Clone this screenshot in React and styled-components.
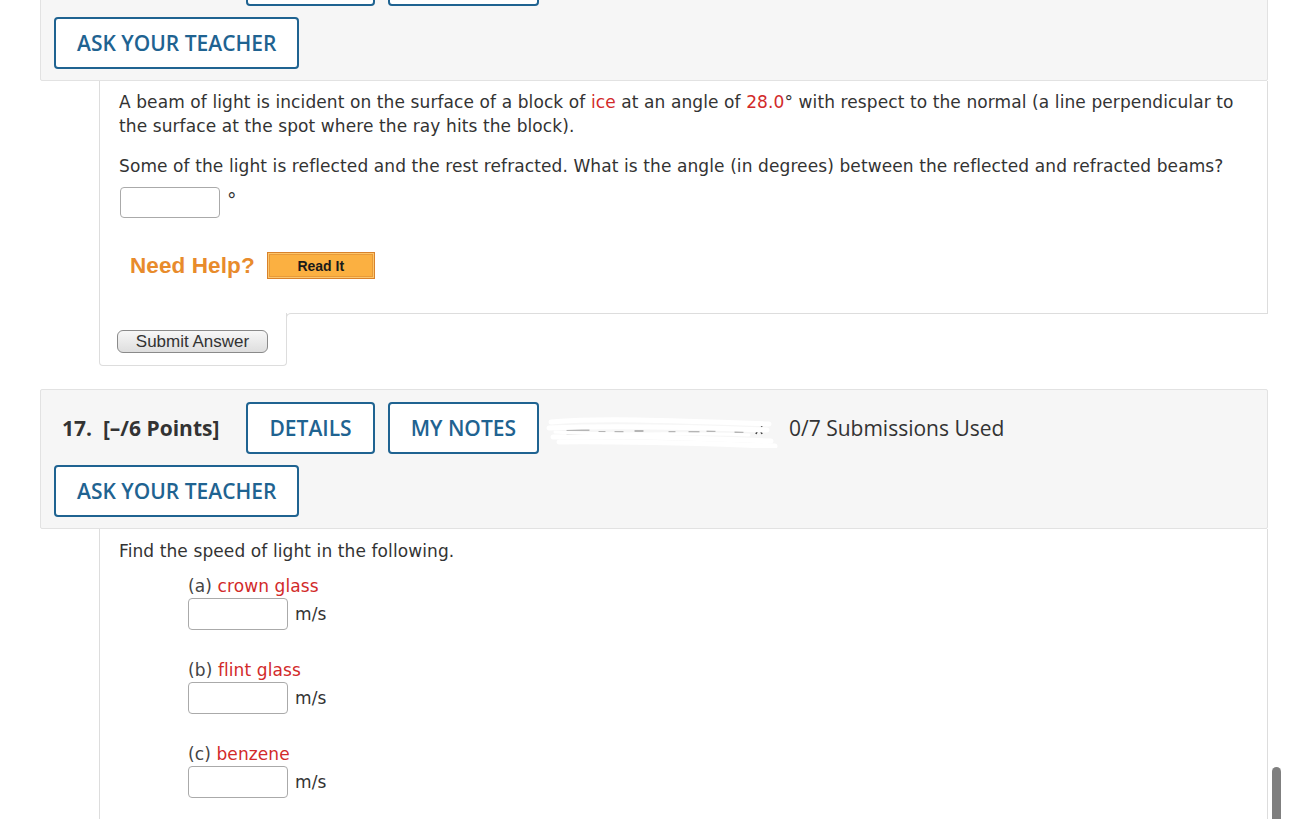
import React from "react";
import styled, { createGlobalStyle } from "styled-components";

const GlobalStyle = createGlobalStyle`
  html, body { margin: 0; padding: 0; background: #ffffff; }
  body { overflow: hidden; }
  * { box-sizing: border-box; }
`;

const Page = styled.div`
  margin: -59px 22px 0 40px;
  width: 1228px;
  color: #333333;
`;

const Question = styled.section`
  margin-bottom: 23px;
`;

const Header = styled.div`
  background: #f6f6f6;
  border: 1px solid #e2e2e2;
  border-radius: 2px;
  padding: 12px 13px 11px 13px;
  display: flex;
  flex-direction: column;
  gap: 11px;
`;

const HeaderRow = styled.div`
  display: flex;
  align-items: center;
  gap: 13px;
`;

const Points = styled.span`
  font-family: "Open Sans", "Liberation Sans", sans-serif;
  font-weight: 700;
  font-size: 21px;
  line-height: 24px;
  color: #333333;
  margin: 0 14px 0 8px;
  white-space: nowrap;
`;

const OutlineButton = styled.button`
  font-family: "Open Sans", "Liberation Sans", sans-serif;
  font-size: 21px;
  line-height: 24px;
  font-weight: 600;
  color: #1f6391;
  background: #ffffff;
  border: 2px solid #1f6391;
  border-radius: 4px;
  padding: 12px 21px;
  height: 52px;
  white-space: nowrap;
  cursor: pointer;
`;

const Submissions = styled.span`
  font-family: "Open Sans", "Liberation Sans", sans-serif;
  font-size: 21px;
  line-height: 24px;
  color: #333333;
  white-space: nowrap;
`;

const Redacted = styled.svg`
  display: block;
  margin: 0 -13px;
  flex: none;
`;

const Content = styled.div`
  margin-left: 59px;
  border-left: 1px solid #dddddd;
  border-right: 1px solid #dddddd;
  padding: ${(p) => p.$pt || 9}px 18px 0 19px;
  min-height: ${(p) => p.$minH || 0}px;
  font-family: "DejaVu Sans", Verdana, sans-serif;
  font-size: 17px;
  letter-spacing: 0.1px;
  line-height: 24px;
  color: #333333;
`;

const Para = styled.p`
  margin: 0 0 ${(p) => p.$mb ?? 16}px 0;
`;

const Red = styled.span`
  color: #d22a2a;
`;

const AnswerRow = styled.div`
  display: flex;
  align-items: center;
  gap: 7px;
  margin: ${(p) => p.$mt || 0}px 0 0 ${(p) => p.$ml || 0}px;
`;

const AnswerInput = styled.input`
  width: 100px;
  height: ${(p) => p.$h || 31}px;
  border: 1px solid #aaaaaa;
  border-radius: 4px;
  background: #ffffff;
  padding: 0 6px;
  font: inherit;
`;

const Unit = styled.span`
  font-family: "DejaVu Sans", Verdana, sans-serif;
  font-size: ${(p) => p.$size || 17}px;
  color: #333333;
  margin-left: ${(p) => p.$ml || 0}px;
  position: relative;
  top: ${(p) => p.$top || 0}px;
`;

const HelpRow = styled.div`
  display: flex;
  align-items: center;
  gap: 12px;
  margin: 34px 0 0 11px;
  padding-bottom: 34px;
`;

const NeedHelp = styled.span`
  font-family: "Liberation Sans", Arial, sans-serif;
  font-weight: 700;
  font-size: 22.5px;
  line-height: 26px;
  color: #e88b2c;
`;

const ReadIt = styled.button`
  width: 108px;
  height: 27px;
  padding: 0;
  background: #fbb041;
  border: 1px solid #d9822b;
  box-shadow: inset 0 0 0 1px #fcc66d, inset 0 0 0 2px #e89a38;
  font-family: "Liberation Sans", Arial, sans-serif;
  font-weight: 700;
  font-size: 14px;
  color: #1a1a1a;
  cursor: pointer;
`;

const SubmitRow = styled.div`
  display: flex;
  margin-left: 59px;
`;

const SubmitTab = styled.div`
  width: 188px;
  border: 1px solid #dddddd;
  border-top: none;
  border-radius: 0 0 4px 4px;
  padding: 17px 18px 12px 17px;
`;

const Filler = styled.div`
  flex: 1;
  height: 8px;
  margin-left: -1px;
  border-top: 1px solid #dddddd;
  border-left: 1px solid #dddddd;
  border-top-left-radius: 5px;
`;

const SubmitButton = styled.button`
  display: block;
  width: 151px;
  height: 23px;
  padding: 0;
  border: 1px solid #8a8a8a;
  border-radius: 6px;
  background: linear-gradient(#f7f7f7, #dedede);
  font-family: "Liberation Sans", Arial, sans-serif;
  font-size: 17px;
  color: #333333;
  cursor: pointer;
`;

const Part = styled.div`
  margin: ${(p) => p.$mt}px 0 0 69px;
`;

const PartLabel = styled.div`
  color: #444444;
  line-height: 24px;
`;

const ScrollThumb = styled.div`
  position: fixed;
  right: 9px;
  bottom: -6px;
  width: 9px;
  height: 58px;
  border-radius: 5px;
  background: #7f7f7f;
`;

function Scribble() {
  return (
    <Redacted width="250" height="40" viewBox="0 0 250 40">
      <g stroke="#a0a0a0" strokeWidth="1.3" strokeLinecap="round">
        <line x1="28" y1="22" x2="50" y2="22" />
        <line x1="28" y1="26" x2="52" y2="26" />
        <line x1="60" y1="24" x2="66" y2="24" />
        <line x1="76" y1="24" x2="84" y2="24" />
        <line x1="96" y1="23" x2="104" y2="23" />
        <line x1="130" y1="24" x2="136" y2="24" />
        <line x1="150" y1="24" x2="160" y2="24" />
        <line x1="168" y1="23" x2="176" y2="23" />
        <line x1="196" y1="24" x2="204" y2="24" />
      </g>
      <path d="M217 26 q3 -8 6 0" stroke="#444" strokeWidth="1.6" fill="none" />
      <path d="M221 15 l2 4" stroke="#444" strokeWidth="1.4" />
      <g stroke="#ffffff" strokeWidth="5" strokeLinecap="round" fill="none">
        <path d="M12 14 C60 10 120 12 230 16" />
        <path d="M10 20 C80 17 150 19 228 22" />
        <path d="M14 29 C80 27 160 30 232 33" />
        <path d="M20 34 C90 33 170 36 236 38" />
        <path d="M16 24 C90 28 150 24 210 27" strokeWidth="3" />
      </g>
    </Redacted>
  );
}

function QuestionHeader({ number, points, submissions }) {
  return (
    <Header>
      <HeaderRow>
        <Points>
          {number}.&nbsp; [–/{points} Points]
        </Points>
        <OutlineButton>DETAILS</OutlineButton>
        <OutlineButton>MY NOTES</OutlineButton>
        <Scribble />
        <Submissions>{submissions}</Submissions>
      </HeaderRow>
      <HeaderRow>
        <OutlineButton>ASK YOUR TEACHER</OutlineButton>
      </HeaderRow>
    </Header>
  );
}

function SpeedPart({ letter, name, mt }) {
  return (
    <Part $mt={mt}>
      <PartLabel>
        ({letter}) <Red>{name}</Red>
      </PartLabel>
      <AnswerRow>
        <AnswerInput $h={32} />
        <Unit>m/s</Unit>
      </AnswerRow>
    </Part>
  );
}

export default function App() {
  return (
    <>
      <GlobalStyle />
      <Page>
        <Question>
          <QuestionHeader number={16} points={1} submissions="0/7 Submissions Used" />
          <Content $pt={9}>
            <Para>
              A beam of light is incident on the surface of a block of <Red>ice</Red> at an
              angle of <Red>28.0</Red>° with respect to the normal (a line perpendicular to
              the surface at the spot where the ray hits the block).
            </Para>
            <Para $mb={0}>
              Some of the light is reflected and the rest refracted. What is the angle (in
              degrees) between the reflected and refracted beams?
            </Para>
            <AnswerRow $mt={9} $ml={1}>
              <AnswerInput $h={31} />
              <Unit $ml={0} $top={-3} $size={19}>°</Unit>
            </AnswerRow>
            <HelpRow>
              <NeedHelp>Need Help?</NeedHelp>
              <ReadIt>Read It</ReadIt>
            </HelpRow>
          </Content>
          <SubmitRow>
            <SubmitTab>
              <SubmitButton>Submit Answer</SubmitButton>
            </SubmitTab>
            <Filler />
          </SubmitRow>
        </Question>
        <Question>
          <QuestionHeader number={17} points={6} submissions="0/7 Submissions Used" />
          <Content $pt={10} $minH={320}>
            <Para $mb={0}>Find the speed of light in the following.</Para>
            <SpeedPart letter="a" name="crown glass" mt={11} />
            <SpeedPart letter="b" name="flint glass" mt={28} />
            <SpeedPart letter="c" name="benzene" mt={28} />
          </Content>
        </Question>
      </Page>
      <ScrollThumb />
    </>
  );
}
